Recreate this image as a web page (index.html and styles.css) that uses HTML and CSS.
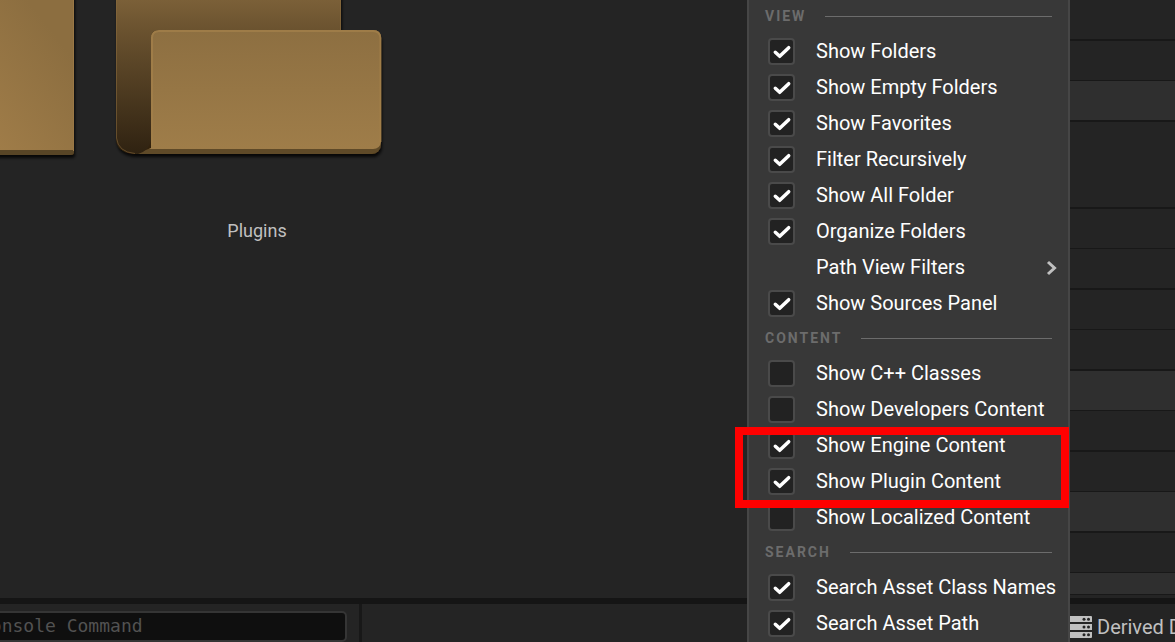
FILE: index.html
```html
<!DOCTYPE html>
<html lang="en">

<head>
    <meta charset="UTF-8" />
    <title>Content Browser</title>
    <link rel="stylesheet" href="styles.css">
</head>

<body>
    <div class="editor">
        <div class="workspace">
            <!-- asset tiles -->
            <div class="assets">
                <div class="tile tile-cut">
                    <svg width="80" height="165" viewBox="0 0 80 165" aria-hidden="true">
                        <defs>
                            <linearGradient id="plain" x1="0" y1="150" x2="90" y2="80" gradientUnits="userSpaceOnUse">
                                <stop offset="0" stop-color="#9f7c48" />
                                <stop offset="1" stop-color="#8c6e40" />
                            </linearGradient>
                            <filter id="shadow" x="-10%" y="-10%" width="120%" height="120%">
                                <feDropShadow dx="1" dy="3" stdDeviation="1.5" flood-color="#000" flood-opacity="0.8" />
                            </filter>
                        </defs>
                        <path d="M-9 -9H74V152Q74 155 71 155H-9Z" fill="#594525" filter="url(#shadow)" />
                        <path d="M-9 -9H74V150H-9Z" fill="url(#plain)" />
                        <path d="M73.5 0V151" stroke="#9a7846" stroke-width="1" />
                    </svg>
                </div>
                <div class="tile">
                    <svg width="304" height="165" viewBox="0 0 304 165" aria-hidden="true">
                        <defs>
                            <linearGradient id="back" x1="0" y1="0" x2="0" y2="154" gradientUnits="userSpaceOnUse">
                                <stop offset="0" stop-color="#7b6038" />
                                <stop offset="0.2" stop-color="#6a522f" />
                                <stop offset="1" stop-color="#2f2211" />
                            </linearGradient>
                            <linearGradient id="front" x1="0" y1="0" x2="0" y2="1">
                                <stop offset="0" stop-color="#8d6f41" />
                                <stop offset="1" stop-color="#9f7d49" />
                            </linearGradient>
                        </defs>
                        <g filter="url(#shadow)">
                            <path d="M11 -9H236V60H270V154H28Q11 152 11 138Z" fill="#33240f" />
                            <rect x="46" y="30" width="230" height="124" rx="9" fill="#5f4a28" />
                        </g>
                        <path d="M46 148V38Q46 30 54 30H268Q276 30 276 38V142Q275 154 263 154H30Z" fill="#5f4a28" />
                        <path d="M46 148V38Q46 30 54 30H268Q276 30 276 38V142Q275 149 268 149H44Z" fill="url(#front)" />
                        <path d="M47 145V38Q47 31 54 31H268Q275 31 275.5 38V142" fill="none" stroke="#a27f4a" stroke-width="2" stroke-opacity="0.8" />
                        <path d="M11 -9H236V30H54Q46 30 46 38V140Q44 151 33 154Q12 152 11 138Z" fill="url(#back)" />
                        <path d="M235.5 0V30M11.5 0V138Q13 152 30 153.5" fill="none" stroke="#8a6c3e" stroke-opacity="0.55" />
                    </svg>
                    <p>Plugins</p>
                </div>
            </div>

            <!-- details list, mostly hidden by the menu -->
            <div class="details">
                <div class="row tall"></div>
                <div class="row"></div>
                <div class="row tall light"></div>
                <div class="row blank"></div>
                <div class="row"></div>
                <div class="row tall"></div>
                <div class="row"></div>
                <div class="row tall"></div>
                <div class="row light"></div>
                <div class="row tall"></div>
                <div class="row"></div>
                <div class="row tall light"></div>
                <div class="row"></div>
                <div class="row last light"></div>
            </div>
        </div>

        <div class="statusbar">
            <div class="console">
                <input type="text" placeholder="Console Command" aria-label="Console Command" />
            </div>
            <button class="derived">
                <svg width="22" height="22" viewBox="0 0 22 22" aria-hidden="true">
                    <path d="M0 0H21Q22 0 22 1V6H0ZM0 8H22V14H0ZM0 16H22V21Q22 22 21 22H0Z" fill="#c0c0c0" />
                    <g fill="#242424">
                        <circle cx="14" cy="3.2" r="1.5" />
                        <circle cx="18.5" cy="3.2" r="1.5" />
                        <circle cx="14" cy="11" r="1.5" />
                        <circle cx="18.5" cy="11" r="1.5" />
                        <circle cx="14" cy="18.8" r="1.5" />
                        <circle cx="18.5" cy="18.8" r="1.5" />
                    </g>
                </svg>
                Derived Data
            </button>
        </div>

        <!-- settings menu -->
        <div class="menu">
            <h3>VIEW</h3>
            <label class="item"><input type="checkbox" checked />Show Folders</label>
            <label class="item"><input type="checkbox" checked />Show Empty Folders</label>
            <label class="item"><input type="checkbox" checked />Show Favorites</label>
            <label class="item"><input type="checkbox" checked />Filter Recursively</label>
            <label class="item"><input type="checkbox" checked />Show All Folder</label>
            <label class="item"><input type="checkbox" checked />Organize Folders</label>
            <button class="item submenu">
                Path View Filters
                <svg width="12" height="18" viewBox="0 0 12 18" aria-hidden="true">
                    <path d="M2 4L8.5 10L2 16" fill="none" stroke="#c0c0c0" stroke-width="3" />
                </svg>
            </button>
            <label class="item"><input type="checkbox" checked />Show Sources Panel</label>

            <h3>CONTENT</h3>
            <label class="item"><input type="checkbox" />Show C++ Classes</label>
            <label class="item"><input type="checkbox" />Show Developers Content</label>
            <div class="marked">
                <label class="item"><input type="checkbox" checked />Show Engine Content</label>
                <label class="item"><input type="checkbox" checked />Show Plugin Content</label>
            </div>
            <label class="item"><input type="checkbox" />Show Localized Content</label>

            <h3>SEARCH</h3>
            <label class="item"><input type="checkbox" checked />Search Asset Class Names</label>
            <label class="item"><input type="checkbox" checked />Search Asset Path</label>
        </div>
    </div>
</body>

</html>
```
FILE: styles.css
```css
* {
    box-sizing: border-box;
}

body {
    margin: 0;
    background-color: #242424;
    color: #fff;
    font-family: Roboto, "Liberation Sans", sans-serif;
    font-size: 20px;
}

button {
    border: none;
    background: none;
    font: inherit;
    text-align: left;
}

.editor {
    position: relative;
    display: flex;
    flex-direction: column;
    height: 100vh;
    overflow: hidden;
}

.workspace {
    display: flex;
    flex: 1;
    min-height: 0;
}

/* tiles */
.assets {
    display: flex;
    flex: 1;
    gap: 25px;
}

.tile svg {
    display: block;
}

.tile p {
    margin: 54px 0 0;
    color: #c0c0c0;
    font-size: 18px;
    line-height: 24px;
    text-align: center;
}

/* details */
.details {
    display: flex;
    flex-direction: column;
    width: 105px;
}

.row {
    flex: none;
    height: 40px;
    border-bottom: 1px solid #181818;
}

.row.tall {
    height: 41px;
    border-bottom-width: 2px;
}

.row.blank {
    height: 87px;
    border-bottom-width: 2px;
}

.row.last {
    flex: 1;
    margin-bottom: 3px;
}

.row.light {
    background-color: #2f2f2f;
}

/* status bar */
.statusbar {
    display: flex;
    justify-content: space-between;
    height: 44px;
    border-top: 6px solid #151515;
}

.console {
    width: 362px;
    padding: 7px 12px 0 0;
    border-right: 3px solid #181818;
}

.console input {
    display: block;
    width: 379px;
    height: 31px;
    margin-left: -32px;
    padding: 0 10px 2px;
    border: 2px solid #353535;
    border-radius: 5px;
    outline: none;
    background-color: #0f0f0f;
    color: #c0c0c0;
    font-family: "DejaVu Sans Mono", monospace;
    font-size: 18px;
}

.console input::placeholder {
    color: #525252;
}

.derived {
    display: flex;
    align-items: center;
    gap: 5px;
    width: 105px;
    padding: 8px 0 0;
    color: #c0c0c0;
    white-space: nowrap;
}

.derived svg {
    flex: none;
}

/* menu */
.menu {
    position: absolute;
    top: -1px;
    right: 105px;
    width: 323px;
    min-height: calc(100% + 1px);
    border: 0 solid #464646;
    border-width: 0 2px;
    background-color: #383838;
}

.menu h3 {
    display: flex;
    align-items: center;
    gap: 19px;
    height: 34px;
    margin: 0;
    padding: 0 16px;
    color: #6c6c6c;
    font-size: 14px;
    font-weight: bold;
    line-height: 18px;
    letter-spacing: 2px;
}

.menu h3::after {
    content: "";
    flex: 1;
    height: 1px;
    background-color: #6c6c6c;
}

.item {
    display: flex;
    align-items: center;
    gap: 21px;
    height: 36px;
    padding: 0 12px 0 19px;
    color: #fff;
    white-space: nowrap;
}

.item input {
    appearance: none;
    flex: none;
    width: 27px;
    height: 27px;
    margin: 0;
    border: 2px solid #4a4a4a;
    border-radius: 4px;
    background: #222 center / 27px 27px no-repeat;
}

.item input:checked {
    background-image: url("data:image/svg+xml,%3Csvg xmlns='http://www.w3.org/2000/svg' viewBox='0 0 27 27'%3E%3Cpath d='M7.3 14.3L11.7 18.3L20.7 9.7' fill='none' stroke='white' stroke-width='3.5' stroke-linecap='round' stroke-linejoin='round'/%3E%3C/svg%3E");
}

.submenu {
    justify-content: space-between;
    width: 100%;
    padding: 0 10px 0 67px;
}

/* red frame around the two options to enable */
.marked {
    position: relative;
}

.marked::after {
    content: "";
    position: absolute;
    top: 0;
    right: -1px;
    bottom: -9px;
    left: -14px;
    border: 8px solid #f00;
    pointer-events: none;
}
```
